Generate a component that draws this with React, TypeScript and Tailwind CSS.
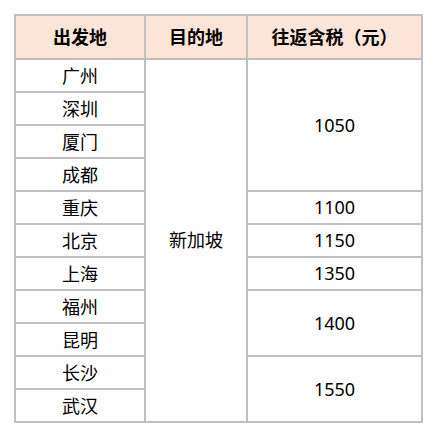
import React from 'react'

const rows: { from: string; price?: string; span?: number }[] = [
  { from: '广州', price: '1050', span: 4 },
  { from: '深圳' },
  { from: '厦门' },
  { from: '成都' },
  { from: '重庆', price: '1100', span: 1 },
  { from: '北京', price: '1150', span: 1 },
  { from: '上海', price: '1350', span: 1 },
  { from: '福州', price: '1400', span: 2 },
  { from: '昆明' },
  { from: '长沙', price: '1550', span: 2 },
  { from: '武汉' },
]

const cell = 'border-2 border-[#c0c0c0] text-center align-middle p-0'

const App = () => {
  return (
    <div className="w-[436px] h-[438px] bg-white pt-[14px] pl-[14px] text-black font-['Noto_Sans','Noto_Sans_CJK_SC',sans-serif]">
      <table className="border-collapse table-fixed w-[407px]">
        <colgroup>
          <col className="w-[130px]" />
          <col className="w-[102px]" />
          <col className="w-[175px]" />
        </colgroup>
        <thead>
          <tr className="h-[44px] bg-[#fce4d6]">
            <th className={`${cell} text-[18px] font-bold`}>出发地</th>
            <th className={`${cell} text-[18px] font-bold`}>目的地</th>
            <th className={`${cell} text-[18px] font-bold`}>往返含税（元）</th>
          </tr>
        </thead>
        <tbody>
          {rows.map((r, i) => (
            <tr key={r.from} className="h-[33px]">
              <td className={`${cell} text-[18px] leading-none`}>{r.from}</td>
              {i === 0 && (
                <td rowSpan={11} className={`${cell} text-[18px]`}>
                  新加坡
                </td>
              )}
              {r.price && (
                <td rowSpan={r.span} className={`${cell} text-[18px]`}>
                  {r.price}
                </td>
              )}
            </tr>
          ))}
        </tbody>
      </table>
    </div>
  )
}

export default App
